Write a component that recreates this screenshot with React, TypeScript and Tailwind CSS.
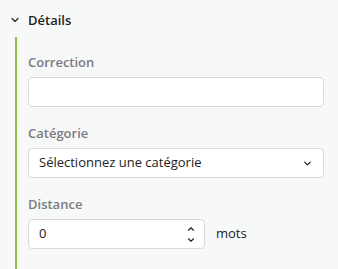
import { ChevronDown, ChevronUp } from "lucide-react";

export default function App() {
  return (
    <div
      className="h-[269px] w-[338px] overflow-hidden bg-[#f7f8f8] text-[13px] text-[#222]"
      style={{ fontFamily: '"Open Sans", "Noto Sans", sans-serif' }}
    >
      <div className="flex items-center pl-[9px] pt-[11px]">
        <ChevronDown className="h-[12px] w-[12px] text-[#333]" strokeWidth={2.75} />
        <span className="ml-[7px] text-[13px] font-semibold leading-[18px] text-[#222]">Détails</span>
      </div>

      <div className="ml-[15px] mt-[8px] border-l-2 border-[#8bc34a] pl-[11px] pr-[14px] pt-[16px] pb-[20px]">
        <label className="block text-[13px] font-semibold leading-[18px] text-[#7b7b80]">Correction</label>
        <input
          type="text"
          className="mt-[6px] block h-[30px] w-full rounded-[4px] border border-[#d9d9d9] bg-white px-[10px] outline-none"
        />

        <label className="mt-[17px] block text-[13px] font-semibold leading-[18px] text-[#7b7b80]">Catégorie</label>
        <div className="mt-[6px] flex h-[30px] w-full items-center justify-between rounded-[4px] border border-[#d9d9d9] bg-white pl-[10px] pr-[10px]">
          <span>Sélectionnez une catégorie</span>
          <ChevronDown className="h-[11px] w-[11px] text-[#222]" strokeWidth={2.75} />
        </div>

        <label className="mt-[17px] block text-[13px] font-semibold leading-[18px] text-[#7b7b80]">Distance</label>
        <div className="mt-[6px] flex items-center">
          <div className="flex h-[30px] w-[177px] items-center justify-between rounded-[4px] border border-[#d9d9d9] bg-white pl-[10px] pr-[8px]">
            <span>0</span>
            <div className="flex flex-col items-center">
              <ChevronUp className="h-[10px] w-[10px] text-[#222]" strokeWidth={2.75} />
              <ChevronDown className="mt-[1px] h-[10px] w-[10px] text-[#222]" strokeWidth={2.75} />
            </div>
          </div>
          <span className="ml-[11px]">mots</span>
        </div>
      </div>
    </div>
  );
}
